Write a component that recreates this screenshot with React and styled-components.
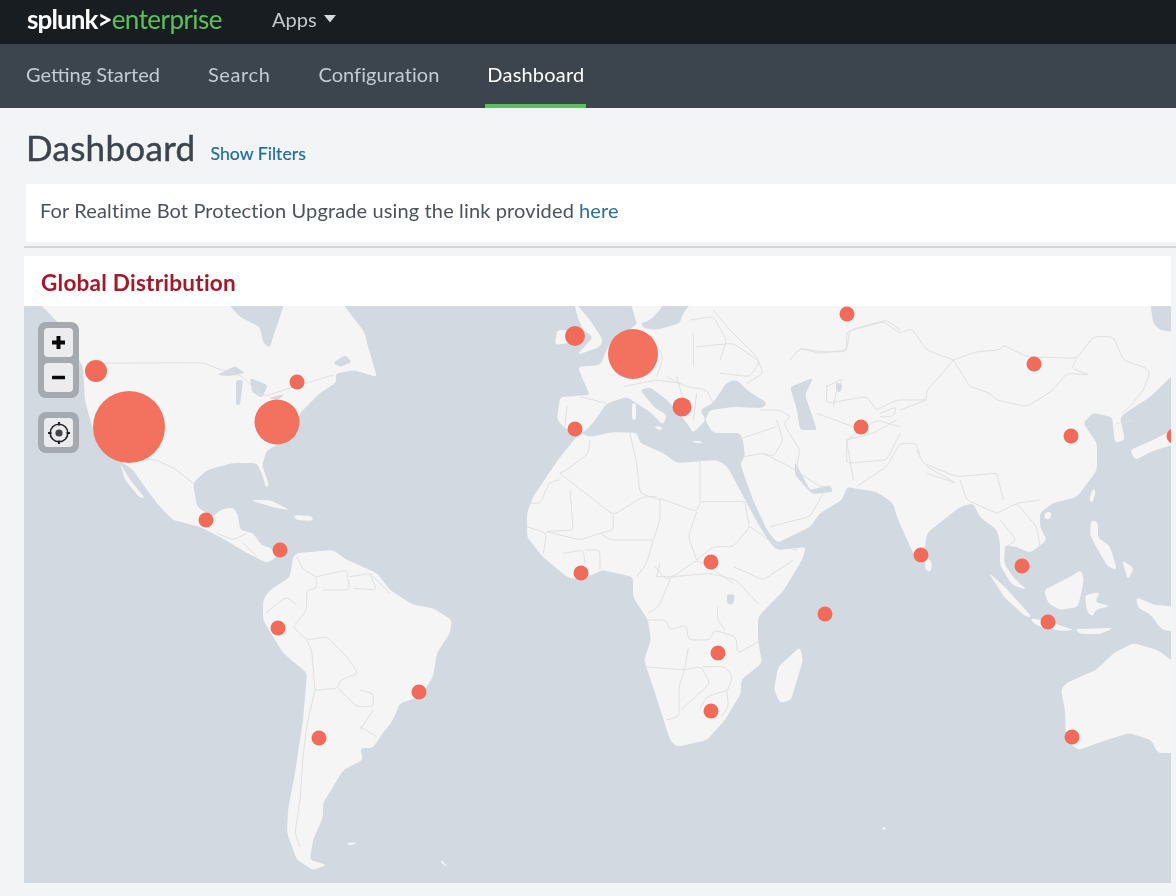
import React from "react";
import styled, { createGlobalStyle } from "styled-components";

const Global = createGlobalStyle`
  html, body { margin: 0; padding: 0; background: #f2f4f5; }
  body { font-family: Lato, "Open Sans", "Liberation Sans", sans-serif; }
  #root { width: 1176px; height: 896px; overflow: hidden; }
`;

const Page = styled.div`
  width: 1176px; height: 896px; overflow: hidden; background: #f2f4f5;
  display: flex; flex-direction: column; filter: blur(.35px);
`;
const TopBar = styled.header`
  height: 44px; background: #171d21; display: flex; align-items: center;
  padding-left: 27px; flex: none;
`;
const Logo = styled.div`
  width: 245px; font-size: 26px; letter-spacing: -0.55px; line-height: 39px; height: 44px; color: #5cc05c; font-weight: 400;
  b { color: #fff; font-weight: 700; letter-spacing: -0.9px; }
`;
const AppsMenu = styled.div`
  display: flex; align-items: center; gap: 7px; color: #c5cad0; font-size: 20px;
  margin-top: -7px;
`;
const NavBar = styled.nav`
  height: 64px; background: #3c444d; display: flex; padding-left: 26px; gap: 48px; flex: none;
`;
const Tab = styled.a`
  height: 64px; box-sizing: border-box; display: flex; align-items: center; font-size: 20px;
  letter-spacing: ${p => p.$spacing}px;
  padding-bottom: 4px;
  color: ${p => (p.$active ? "#fff" : "#c3cbd4")};
  box-shadow: ${p => (p.$active ? "inset 0 -4px 0 #5cc05c" : "none")};
  padding-left: ${p => (p.$active ? "2px" : "0")};
  padding-right: ${p => (p.$active ? "2px" : "0")};
  margin: 0 ${p => (p.$active ? "-2px" : "0")};
`;
const Header = styled.div`
  height: 76px; display: flex; align-items: center; padding: 2px 0 0 26px; box-sizing: border-box; gap: 15px; flex: none;
`;
const Title = styled.h1`
  margin: 0; font-size: 35px; font-weight: 400; color: #3c444d; letter-spacing: .3px;
  -webkit-text-stroke: .45px #3c444d;
`;
const FilterLink = styled.a`
  color: #1e6e9f; font-size: 17.7px; margin-top: 13px; -webkit-text-stroke: .2px #1e6e9f;
`;
const Notice = styled.div`
  margin-left: 26px; height: 58px; background: #fff; display: flex; align-items: center;
  padding: 0 0 6px 14px; box-sizing: border-box; font-size: 20px; letter-spacing: .13px; color: #4a525b; flex: none;
  a { color: #2b6d9e; margin-left: 5px; }
`;
const Rule = styled.hr`
  margin: 4px 0 8px 24px; height: 2px; border: 0; background: #d4d8dc; flex: none;
`;
const Panel = styled.section`
  margin-left: 24px; width: 1147px; background: #fff; flex: none;
`;
const PanelTitle = styled.h2`
  margin: 0; height: 50px; box-sizing: border-box; padding: 2px 0 0 17px; display: flex; align-items: center;
  font-size: 22.5px; letter-spacing: .25px; font-weight: 700; color: #a5172a;
`;
const MapArea = styled.div`
  position: relative; height: 577px; background: #d3d9e0; overflow: hidden;
`;
const MapSvg = styled.svg`
  display: block; width: 1147px; height: 577px;
`;
const ControlStack = styled.div`
  position: absolute; left: 14px; top: ${p => p.$top}px; padding: 6px; background: #a5aab0;
  border-radius: 8px; display: flex; flex-direction: column; gap: 6px;
`;
const ControlButton = styled.div`
  width: 29px; height: 29px; border-radius: 4px; background: #ececee;
  display: flex; align-items: center; justify-content: center;
`;

const parse = s => s.trim().split(/\s+/).map(p => p.split(",").map(Number));
const toward = (a, b, r) => {
  const dx = b[0] - a[0], dy = b[1] - a[1], len = Math.hypot(dx, dy) || 1;
  const k = Math.min(r, len / 2) / len;
  return [a[0] + dx * k, a[1] + dy * k];
};
const rounded = (s, closed, r = 5) => {
  const pts = parse(s), n = pts.length;
  const fmt = p => `${p[0].toFixed(1)} ${p[1].toFixed(1)}`;
  if (closed) {
    let d = "";
    pts.forEach((p, i) => {
      const a = toward(p, pts[(i + n - 1) % n], r), b = toward(p, pts[(i + 1) % n], r);
      d += `${i ? "L" : "M"}${fmt(a)}Q${fmt(p)} ${fmt(b)}`;
    });
    return d + "Z";
  }
  let d = `M${fmt(pts[0])}`;
  for (let i = 1; i < n - 1; i++) {
    const a = toward(pts[i], pts[i - 1], r * 3), b = toward(pts[i], pts[i + 1], r * 3);
    d += `L${fmt(a)}Q${fmt(pts[i])} ${fmt(b)}`;
  }
  return d + `L${fmt(pts[n - 1])}`;
};

const land = [
  // North America
  "35,300 48,312 60,325 73,350 83,367 85,400 93,430 113,457 122,462 133,470 147,490 160,507 173,520 200,527 220,537 247,553 267,563 277,557 270,547 262,546 253,533 240,530 238,515 233,507 220,510 213,517 197,507 193,483 207,470 233,463 257,463 263,477 266,488 269,485 262,465 267,450 287,440 300,413 320,393 337,382 335,374 353,370 360,372 377,377 367,343 365,333 340,300 285,300 280,317 273,337 270,348 263,343 260,327 240,317 225,300",
  // South America
  "297,553 333,550 347,560 377,573 390,590 413,605 433,608 452,620 450,633 437,653 433,677 420,697 400,703 393,720 380,737 373,748 360,748 363,760 343,770 333,787 323,803 323,817 313,840 310,860 327,865 313,870 297,860 287,833 288,810 295,773 303,720 307,673 283,653 263,620 263,600 270,590 290,577 293,557",
  // Africa
  "580,433 560,457 533,497 527,513 527,537 543,557 567,577 580,580 603,570 633,577 633,597 648,620 651,640 644,660 655,693 670,740 677,747 707,740 725,720 741,693 741,680 762,663 758,640 758,617 784,590 802,560 806,547 777,550 770,543 757,522 733,477 727,466 717,460 677,463 663,453 640,443 637,433 613,432 590,437",
  // Eurasia
  "578,367 600,365 610,343 632,328 640,320 643,328 657,330 680,323 683,313 694,300 1150,300 1153,323 1160,330 1180,333 1180,368 1150,397 1130,410 1120,417 1125,440 1115,443 1112,417 1093,413 1083,423 1097,443 1097,470 1077,497 1053,503 1040,513 1040,527 1047,540 1030,553 1017,547 1005,545 1004,563 1013,577 1027,590 1012,585 1000,565 1000,543 997,530 980,517 973,503 960,507 947,517 927,533 923,560 913,553 897,517 893,503 877,492 847,487 842,500 820,513 810,527 777,543 767,530 753,500 740,463 745,457 743,440 740,433 713,433 705,420 710,410 733,407 763,408 767,403 747,390 737,380 727,382 713,403 700,410 706,420 693,433 687,423 667,400 650,387 640,390 655,408 667,415 663,425 650,412 627,397 607,403 593,423 583,433 567,430 557,420 560,397 590,395 583,380",
  // Scandinavia, British Isles
  "630,300 637,325 650,320 660,310 665,300",
  "573,300 590,320 603,340 600,347 577,355 593,337 583,330 578,318",
  "557,330 568,330 570,343 555,345",
  // Madagascar
  "800,647 803,660 791,700 780,703 774,690 778,667",
  // Japan, Taiwan, Hainan, Sri Lanka
  "1130,450 1153,440 1167,433 1180,425 1180,443 1155,450 1135,460",
  "1093,488 1096,492 1092,503 1089,500",
  "1045,512 1052,512 1050,520 1044,518",
  "925,555 932,562 931,572 925,570",
  // Caribbean and Baja
  "250,500 270,500 290,510 275,508",
  "293,515 312,516 313,521 296,520",
  "120,463 130,480 145,498 140,498 125,480",
  // Mediterranean islands
  "632,403 636,403 636,420 632,420",
  "653,426 663,427 660,431",
  "690,441 703,441 700,444",
  // Indonesia, Philippines
  "989,573 1004,586 1032,617 1026,617 1004,597",
  "1044,590 1068,578 1081,570 1084,580 1078,607 1060,610 1048,603",
  "1085,595 1100,592 1095,602 1110,606 1095,610 1093,617 1087,612",
  "1030,618 1050,622 1074,630 1060,631 1035,625",
  "1075,629 1114,628 1100,634 1080,634",
  "1136,597 1155,605 1180,607 1180,632 1162,630 1150,614 1138,608",
  "1091,520 1098,522 1098,538 1110,546 1117,570 1108,567 1098,550 1090,535",
  "1122,560 1134,568 1128,580",
  // Australia
  "1061,690 1066,683 1096,670 1114,653 1133,643 1158,650 1180,667 1180,753 1158,753 1151,740 1129,733 1107,740 1078,750 1066,740 1065,710",
  // Small southern isles
  "883,826 887,829 882,830",
  "346,843 358,842 350,846",
  "441,860 446,864 447,867 441,863",
];

const water = [
  "217,375 235,366 245,373 230,376",
  "236,380 243,380 240,405 236,405",
  "250,378 268,385 262,398 252,392",
  "268,398 285,394 278,400",
  "333,363 345,355 352,362 340,367",
  // Caspian, Persian Gulf, Aral
  "790,387 813,378 805,395 817,430 800,430 797,410",
  "795,462 810,490 830,485 833,492 812,494 795,475",
  "836,382 843,385 840,393 836,390",
  // Lake Victoria
  "727,594 735,595 733,605 727,604",
];

const borderGroups = [
  { t: "translate(500 300) scale(.3333)", lines: [
    "270,420 265,460 200,510 180,520", "180,520 340,645 430,590 470,590", "390,400 410,490 420,580 480,600",
    "600,480 600,605", "480,595 590,635 600,605 735,605", "210,570 220,690 140,695", "80,610 120,610 150,545 180,540",
    "340,645 340,690 300,700 240,720 140,695", "480,595 480,660 460,720", "300,700 330,720 460,720",
    "590,635 565,710 590,780", "590,780 640,740 700,740 750,680 740,640 735,605", "750,680 820,730 890,750",
    "700,800 790,840 880,780", "460,720 440,790 410,830", "480,790 470,830", "80,680 140,700 130,760",
    "190,760 250,750 255,790", "255,750 300,750 300,810", "470,830 520,830 590,780 640,810 700,850",
    "460,120 490,170 470,230", "370,260 470,240 540,250", "580,100 580,200", "570,60 640,50 680,120 660,180",
    "590,140 700,130 780,185 750,230 660,220", "640,30 690,90 770,170 790,220 740,250",
    "500,230 560,260 620,270 640,310", "200,320 195,380", "240,290 320,310", "530,230 550,300", "590,280 580,360",
    "870,180 900,145 960,160 1040,150 1050,90 1160,60 1200,90", "980,260 1030,235 1010,270 1000,320",
    "950,340 1060,380 1110,400", "870,350 850,370 900,450 890,500", "1040,420 1050,480 1060,540",
    "1040,420 1120,400 1190,360", "830,360 850,420 820,470 790,460", "730,470 790,460 870,500 960,560 990,560",
    "810,680 930,650 975,570", "780,330 840,330 870,350", "710,420 830,380",
  ]},
  { t: "translate(800 300) scale(.3333)", lines: [
    "0,145 60,155 140,155 140,95 250,65 300,100 335,85 380,150 460,180",
    "460,180 530,155 600,150 610,135 680,170 830,175 880,110 940,110 970,180 1040,205 1050,220 1030,270 990,320 965,340",
    "460,180 510,260 570,280 590,300 680,320 760,270 800,220 870,225 815,205 830,175",
    "460,180 410,240 380,270 380,300 300,330", "80,255 80,310 200,290 230,330", "230,330 290,300 380,300",
    "140,420 230,360 300,380", "140,420 140,490 260,480 300,400", "170,560 260,500 300,430 350,430 360,470",
    "350,450 370,490 470,530 590,520", "380,500 470,550 380,520", "480,540 500,600 590,640", "590,520 610,600",
    "590,640 650,610 710,680 720,740", "650,610 720,600", "950,370 1000,360", "240,340 290,320 280,350 240,350",
    "600,660 650,720 620,740",
  ]},
  { t: "translate(200 540) scale(.3333)", lines: [
    "290,50 310,90 350,110 350,145 320,150 320,210 280,260", "350,110 440,90 450,150 370,150",
    "450,110 510,100 530,150 460,145", "510,100 570,160", "195,220 260,170 290,195", "280,260 320,300 380,290 440,350",
    "320,300 335,330 345,450", "345,450 415,445 420,420 475,400 440,350", "415,445 470,500 520,500 520,460 480,450",
    "345,450 320,560 310,640 300,780 285,880 300,920", "520,510 480,570", "480,560 530,590",
  ]},
  { t: "translate(600 560) scale(.3674 .3333)", lines: [
    "150,20 180,60 200,50 300,40 370,60 430,130", "190,60 160,140 130,160",
    "130,180 180,180 190,210 235,195 240,240 300,240 310,210 370,230 375,280 440,240",
    "120,320 230,330 240,265", "230,330 215,380 215,470 180,480", "225,330 275,320 300,370 220,450",
    "280,320 340,320 360,345 350,390 290,410 270,450", "345,390 350,440 330,470", "320,140 320,180 340,210",
  ]},
  { t: "translate(0 300) scale(.3333)", lines: [
    "260,190 610,188 650,205 720,225 790,290 900,255 1000,225", "340,470 470,480 530,510 585,555",
    "650,700 700,720 740,700", "730,730 770,770",
  ]},
];

const pins = [
  [96, 371, 11], [129, 427, 36], [277, 422, 22.5], [297, 382, 7.5], [206, 520, 7.5], [280, 550, 7.5],
  [278, 628, 7.5], [419, 692, 7.5], [319, 738, 7.5], [575, 336, 10], [633, 354, 25], [682, 407, 9.5],
  [575, 429, 7.5], [847, 314, 7.5], [1034, 364, 7.5], [861, 427, 7.5], [1071, 436, 7.5], [1174, 436, 7.5],
  [581, 573, 7.5], [711, 562, 7.5], [921, 555, 7.5], [1022, 566, 7.5], [825, 614, 7.5], [1048, 622, 7.5],
  [718, 653, 7.5], [711, 711, 7.5], [1072, 737, 7.5],
];

const WorldMap = () => (
  <MapSvg viewBox="24 306 1147 577" aria-label="World map">
    <rect x="24" y="306" width="1147" height="577" fill="#d3d9e0" />
    {land.map((p, i) => <path key={i} d={rounded(p, true, 4)} fill="#f5f5f5" />)}
    {water.map((p, i) => <path key={i} d={rounded(p, true, 3)} fill="#d3d9e0" />)}
    {borderGroups.map((g, i) => (
      <g key={i} transform={g.t} fill="none" stroke="#dfe0e2">
        {g.lines.map((l, j) => (
          <path key={j} d={rounded(l, false, 4)} strokeWidth="1" vectorEffect="non-scaling-stroke" />
        ))}
      </g>
    ))}
    {pins.map(([x, y, r], i) => <circle key={i} cx={x} cy={y} r={r} fill={r < 12 ? "#f06b5a" : "#f2725f"} />)}
  </MapSvg>
);

const Plus = () => (
  <svg width="15" height="15" viewBox="0 0 15 15"><path d="M5.5 1h4v4.500h4.500v4H9.500v4.500h-4V9.500H1v-4h4.500z" fill="#0a0a0a" /></svg>
);
const Minus = () => (
  <svg width="15" height="15" viewBox="0 0 15 15"><rect x="1" y="5.700" width="13" height="3.600" rx=".6" fill="#0a0a0a" /></svg>
);
const Locate = () => (
  <svg width="24" height="24" viewBox="0 0 24 24" fill="none" stroke="#222">
    <circle cx="12" cy="12" r="8.800" strokeWidth="1.600" />
    <circle cx="12" cy="12" r="3.600" fill="#444" stroke="none" />
    <path d="M12 1v3.500M12 19.500v3.500M1 12h3.500M19.500 12h3.500" strokeWidth="2" />
  </svg>
);
const Caret = () => (
  <svg width="12" height="8" viewBox="0 0 12 8"><path d="M0 0h12L6 7.500z" fill="#d5d9dd" /></svg>
);

export default function App() {
  return (
    <Page>
      <Global />
      <TopBar>
        <Logo><b>splunk&gt;</b>enterprise</Logo>
        <AppsMenu>Apps <Caret /></AppsMenu>
      </TopBar>
      <NavBar>
        <Tab $spacing={0}>Getting Started</Tab>
        <Tab $spacing={0.6}>Search</Tab>
        <Tab $spacing={0.05}>Configuration</Tab>
        <Tab $spacing={0.2} $active>Dashboard</Tab>
      </NavBar>
      <Header>
        <Title>Dashboard</Title>
        <FilterLink>Show Filters</FilterLink>
      </Header>
      <Notice>For Realtime Bot Protection Upgrade using the link provided <a>here</a></Notice>
      <Rule />
      <Panel>
        <PanelTitle>Global Distribution</PanelTitle>
        <MapArea>
          <WorldMap />
          <ControlStack $top={16}>
            <ControlButton><Plus /></ControlButton>
            <ControlButton><Minus /></ControlButton>
          </ControlStack>
          <ControlStack $top={106}>
            <ControlButton><Locate /></ControlButton>
          </ControlStack>
        </MapArea>
      </Panel>
    </Page>
  );
}
